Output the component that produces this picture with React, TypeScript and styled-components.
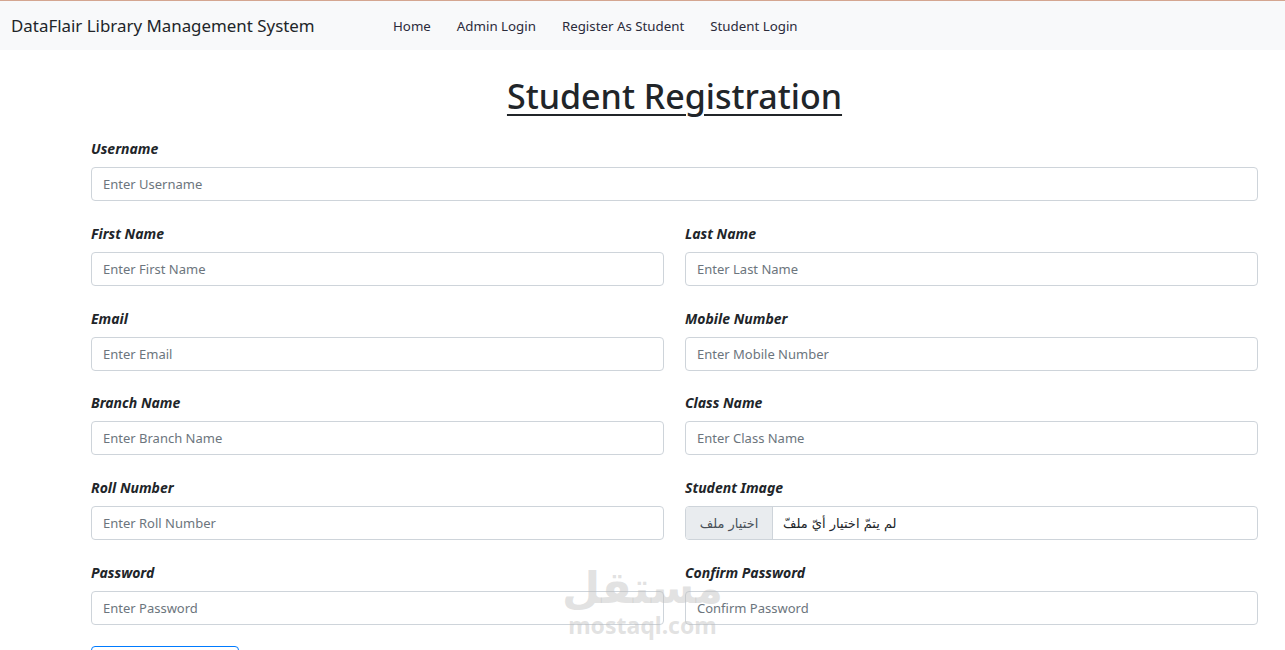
import React from 'react';
import styled, { createGlobalStyle } from "styled-components";

const GlobalStyle = createGlobalStyle`
    body {
        margin: 0;
        background: #ffffff;
        font-family: "Noto Sans", "DejaVu Sans", sans-serif;
        color: #212529;
        overflow: hidden;
    }
`

type FieldType = {
    label: string
    placeholder: string
    file?: boolean
}

const rows: FieldType[][] = [
    [{label: "First Name", placeholder: "Enter First Name"}, {label: "Last Name", placeholder: "Enter Last Name"}],
    [{label: "Email", placeholder: "Enter Email"}, {label: "Mobile Number", placeholder: "Enter Mobile Number"}],
    [{label: "Branch Name", placeholder: "Enter Branch Name"}, {label: "Class Name", placeholder: "Enter Class Name"}],
    [{label: "Roll Number", placeholder: "Enter Roll Number"}, {label: "Student Image", placeholder: "", file: true}],
    [{label: "Password", placeholder: "Enter Password"}, {label: "Confirm Password", placeholder: "Confirm Password"}],
]

const Field = (props: FieldType) => {
    return (
        <FieldBox>
            <Label>{props.label}</Label>
            {props.file ? (
                <FileBox>
                    <FileButton>اختيار ملف</FileButton>
                    <FileText>لم يتمّ اختيار أيّ ملفّ</FileText>
                </FileBox>
            ) : (
                <Input placeholder={props.placeholder} type={props.label.includes("Password") ? "password" : "text"}/>
            )}
        </FieldBox>
    );
};

export default function App() {
    return (
        <>
            <GlobalStyle/>
            <Navbar>
                <Brand>DataFlair Library Management System</Brand>
                <NavList>
                    <NavLink>Home</NavLink>
                    <NavLink>Admin Login</NavLink>
                    <NavLink>Register As Student</NavLink>
                    <NavLink>Student Login</NavLink>
                </NavList>
            </Navbar>
            <Page>
                <Title>Student Registration</Title>
                <Form>
                    <Field label="Username" placeholder="Enter Username"/>
                    {rows.map((row, i) => (
                        <Row key={i}>
                            {row.map(f => <Field key={f.label} {...f}/>)}
                        </Row>
                    ))}
                    <SubmitButton type="button">Register</SubmitButton>
                </Form>
                <Watermark>
                    <WatermarkArabic>مستقل</WatermarkArabic>
                    <WatermarkLatin>mostaql.com</WatermarkLatin>
                </Watermark>
            </Page>
        </>
    );
}

const Navbar = styled.nav`
    height: 49px;
    border-top: 1px solid #d4a690;
    background-color: #f8f9fa;
    display: flex;
    align-items: center;
    padding-left: 11px;
`

const Brand = styled.div`
    font-size: 16.9px;
    color: #212529;
    width: 382px;
`

const NavList = styled.div`
    display: flex;
    gap: 26px;
`

const NavLink = styled.a`
    font-size: 13.3px;
    color: #2b2b3a;
    cursor: pointer;
`

const Page = styled.main`
    position: relative;
    padding: 0 27px 0 91px;
`

const Title = styled.h1`
    margin: 22px 0 19px;
    height: 48px;
    line-height: 48px;
    text-align: center;
    font-size: 34px;
    font-weight: 500;
    text-decoration: underline;
    text-decoration-thickness: 2px;
    text-underline-offset: 5px;
`

const Form = styled.form`
    display: flex;
    flex-direction: column;
    gap: 22.75px;
`

const Row = styled.div`
    display: grid;
    grid-template-columns: 1fr 1fr;
    gap: 21px;
`

const FieldBox = styled.div`
    display: flex;
    flex-direction: column;
`

const Label = styled.label`
    font-size: 14px;
    font-weight: 700;
    font-style: italic;
    line-height: 20px;
    margin-bottom: 8px;
`

const Input = styled.input`
    box-sizing: border-box;
    height: 34px;
    width: 100%;
    padding: 0 11px;
    border: 1px solid #ced4da;
    border-radius: 4px;
    font-family: "Noto Sans", sans-serif;
    font-size: 13px;
    color: #495057;
    outline: none;

    &::placeholder {
        color: #6c757d;
    }
`

const FileBox = styled.div`
    box-sizing: border-box;
    height: 34px;
    display: flex;
    align-items: stretch;
    border: 1px solid #ced4da;
    border-radius: 4px;
    overflow: hidden;
`

const FileButton = styled.span`
    width: 86px;
    display: flex;
    align-items: center;
    justify-content: center;
    background-color: #e9ecef;
    border-right: 1px solid #ced4da;
    font-family: "DejaVu Sans", sans-serif;
    font-size: 13px;
    color: #495057;
`

const FileText = styled.span`
    display: flex;
    align-items: center;
    padding-left: 10px;
    font-family: "DejaVu Sans", sans-serif;
    font-size: 13px;
    color: #212529;
`

const SubmitButton = styled.button`
    width: 148px;
    height: 38px;
    margin-top: -2px;
    border: 1px solid #007bff;
    border-radius: 4px;
    background: transparent;
    color: #007bff;
    font-family: "Noto Sans", sans-serif;
    font-size: 16px;
`

const Watermark = styled.div`
    position: absolute;
    left: 562px;
    top: 488px;
    display: flex;
    flex-direction: column;
    align-items: center;
    pointer-events: none;
    color: rgba(190, 190, 190, 0.45);
`

const WatermarkArabic = styled.div`
    font-family: "DejaVu Sans", sans-serif;
    font-size: 44px;
    font-weight: 700;
    line-height: 56px;
`

const WatermarkLatin = styled.div`
    font-family: "Noto Sans", sans-serif;
    font-size: 23px;
    font-weight: 700;
    line-height: 26px;
    margin-top: -4px;
`
